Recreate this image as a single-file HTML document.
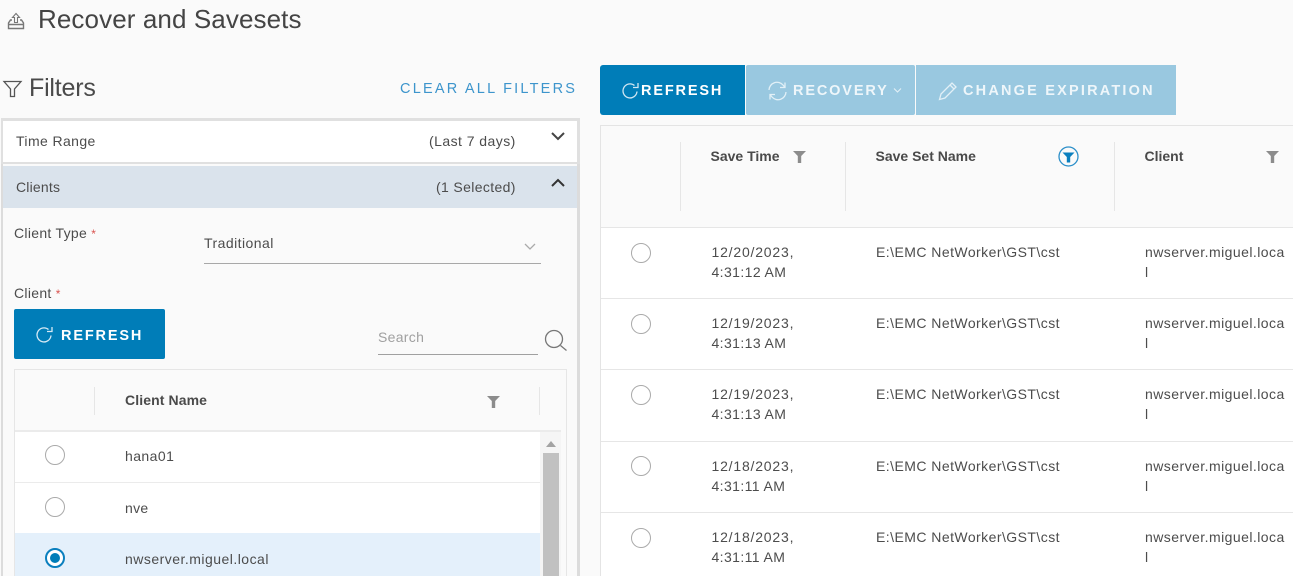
<!DOCTYPE html>
<html><head><meta charset="utf-8">
<style>
html,body{margin:0;padding:0;background:#fafafa;width:1293px;height:576px;overflow:hidden}
#p{width:1293px;height:576px;position:relative;overflow:hidden;font-family:"Liberation Sans",sans-serif;color:#444}
.a{position:absolute}
.t{position:absolute;white-space:nowrap;font-size:14px;line-height:20px;color:#4c4c4c;letter-spacing:.4px}
.d{letter-spacing:.8px}
.c{letter-spacing:.4px}
.b{font-weight:700;font-size:14px;color:#4a4a4a;letter-spacing:0}
.btn{position:absolute;color:#fff;font-weight:700;font-size:14.5px;letter-spacing:1.85px;white-space:nowrap;line-height:20px}
svg{position:absolute;overflow:visible}
.r{position:absolute;border:1.5px solid #aaa;border-radius:50%;box-sizing:border-box;width:20px;height:20px;background:#fff}
.ln{position:absolute;background:#e6e6e6}
</style></head><body><div id="p">

<svg style="left:7px;top:12px" width="18" height="18" viewBox="0 0 18 18" fill="none" stroke="#777" stroke-width="1.400"><path d="M5 8H3.500L1.500 11v5.500h15V11l-2-3H13M1.500 12.500h15"/><path d="M9 1.500L5.500 5.500h2v5h3v-5h2z" stroke-width="1.100"/></svg>
<div class="t" style="left:38px;top:3px;font-size:26px;line-height:32px;color:#444;letter-spacing:.1px">Recover and Savesets</div>

<svg style="left:3px;top:80px" width="20" height="18" viewBox="0 0 20 18" fill="none" stroke="#555" stroke-width="1.300"><path d="M1 1.500h17l-6.500 7.500v7.500h-4v-7.500z"/></svg>
<div class="t" style="left:29px;top:73px;font-size:25px;line-height:30px;color:#4a4a4a;letter-spacing:-.2px">Filters</div>
<div class="t" style="left:400px;top:79px;font-size:14.500px;color:#3d95cc;letter-spacing:2.220px">CLEAR ALL FILTERS</div>

<!-- left panel -->
<div class="a" style="left:1px;top:119px;width:579px;height:470px;box-sizing:border-box;border-left:2px solid #dcdcdc;border-right:3px solid #dcdcdc"></div>
<div class="a" style="left:1px;top:118px;width:579px;height:46px;box-sizing:border-box;border:2px solid #e0e0e0;border-top-width:3px;border-right-width:3px;background:#fff"></div>
<div class="a" style="left:3px;top:166px;width:574px;height:42px;background:#dae3ec"></div>
<div class="t" style="left:16px;top:131px">Time Range</div>
<div class="t" style="left:429px;top:131px;letter-spacing:.45px">(Last 7 days)</div>
<svg style="left:551px;top:132px" width="14" height="9" viewBox="0 0 14 9" fill="none" stroke="#444" stroke-width="2"><path d="M1 1l6 6 6-6"/></svg>
<div class="t" style="left:16px;top:177px;letter-spacing:.2px">Clients</div>
<div class="t" style="left:436px;top:177px;letter-spacing:.36px">(1 Selected)</div>
<svg style="left:551px;top:178px" width="14" height="9" viewBox="0 0 14 9" fill="none" stroke="#333" stroke-width="2"><path d="M1 8l6-6 6 6"/></svg>

<div class="t" style="left:14px;top:223px;letter-spacing:.3px">Client Type <span style="color:#d9534f;font-size:12px">*</span></div>
<div class="t" style="left:204px;top:233px;letter-spacing:.45px">Traditional</div>
<div class="ln" style="left:204px;top:263px;width:337px;height:1px;background:#a8a8a8"></div>
<svg style="left:524px;top:243px" width="12" height="7" viewBox="0 0 12 7" fill="none" stroke="#aaa" stroke-width="1.300"><path d="M1 1l5 5 5-5"/></svg>
<div class="t" style="left:14px;top:283px;letter-spacing:.3px">Client <span style="color:#d9534f;font-size:12px">*</span></div>

<div class="a" style="left:14px;top:309px;width:151px;height:50px;background:#007db8;border-radius:2px"></div>
<svg style="left:35px;top:326px" width="19" height="19" viewBox="0 0 19 19" fill="none" stroke="#d5e9f4" stroke-width="1.300"><path d="M16 9.500a7 7 0 1 1-2.500-6M17 1v4.500h-5"/></svg>
<div class="btn" style="left:61px;top:325.500px">REFRESH</div>

<div class="t" style="left:378px;top:327px;color:#a0a0a0;letter-spacing:.3px">Search</div>
<div class="ln" style="left:378px;top:354px;width:160px;height:1px;background:#a0a0a0"></div>
<svg style="left:544px;top:329px" width="24" height="24" viewBox="0 0 24 24" fill="none" stroke="#777" stroke-width="1.300"><circle cx="10" cy="10" r="8.500"/><path d="M16.500 16.500l6 5"/></svg>

<!-- client table -->
<div class="a" style="left:14px;top:369px;width:553px;height:220px;box-sizing:border-box;border:1px solid #e6e6e6"></div>
<div class="a" style="left:15px;top:430px;width:546px;height:2px;background:#ebebeb"></div>
<div class="ln" style="left:94px;top:387px;width:1px;height:28px"></div>
<div class="ln" style="left:539px;top:387px;width:1px;height:28px"></div>
<div class="t b" style="left:125px;top:390px;letter-spacing:.1px">Client Name</div>
<svg style="left:487px;top:396px" width="13" height="12" viewBox="0 0 13 12" fill="#8c8c8c"><path d="M0 0h13l-4.800 5v7h-3.400V5z"/></svg>
<div class="a" style="left:15px;top:432px;width:525px;height:50px;background:#fff"></div>
<div class="a" style="left:15px;top:482px;width:525px;height:1px;background:#ebebeb"></div>
<div class="a" style="left:15px;top:483px;width:525px;height:50px;background:#fff"></div>
<div class="a" style="left:15px;top:533px;width:525px;height:43px;background:#e4f0fb"></div>
<div class="r" style="left:45px;top:445px"></div>
<div class="r" style="left:45px;top:497px"></div>
<div class="a" style="left:45px;top:548px;width:20px;height:20px;box-sizing:border-box;border:2px solid #0a7fbe;border-radius:50%;background:#fff"></div>
<div class="a" style="left:50px;top:553px;width:10px;height:10px;border-radius:50%;background:#007db8"></div>
<div class="t" style="left:125px;top:446px;letter-spacing:.43px">hana01</div>
<div class="t" style="left:125px;top:498px;letter-spacing:.3px">nve</div>
<div class="t" style="left:125px;top:549px;letter-spacing:.48px">nwserver.miguel.local</div>
<div class="a" style="left:540px;top:432px;width:21px;height:144px;background:#f5f5f5"></div>
<div class="a" style="left:543px;top:453px;width:16px;height:123px;background:#c1c1c1"></div>
<svg style="left:546px;top:441px" width="10" height="6" viewBox="0 0 10 6" fill="#a3a3a3"><path d="M5 0l5 6H0z"/></svg>

<!-- action buttons -->
<div class="a" style="left:600px;top:65px;width:145px;height:50px;background:#007db8;border-radius:3px 0 0 3px"></div>
<div class="a" style="left:746px;top:65px;width:169px;height:50px;background:#99c8e0;border-radius:2px"></div>
<div class="a" style="left:916px;top:65px;width:260px;height:50px;background:#99c8e0"></div>
<svg style="left:621px;top:82px" width="19" height="19" viewBox="0 0 19 19" fill="none" stroke="#cfe6f2" stroke-width="1.300"><path d="M16 9.500a7 7 0 1 1-2.500-6M17 1v4.500h-5"/></svg>
<div class="btn" style="left:641px;top:81px">REFRESH</div>
<svg style="left:768px;top:81px" width="19" height="20" viewBox="0 0 19 20" fill="none" stroke="#e2f0f7" stroke-width="1.300"><path d="M1 9a8 8 0 0 1 14-5l2 2.500M17 1.500v5h-5M18 11a8 8 0 0 1-14 5l-2-2.500M2 18.500v-5h5"/></svg>
<div class="btn" style="left:793px;top:81px;color:#eef6fa">RECOVERY</div>
<svg style="left:893px;top:88px" width="9" height="5" viewBox="0 0 9 5" fill="none" stroke="#e2f0f7" stroke-width="1.100"><path d="M1 .5l3.500 3.500L8 .5"/></svg>
<svg style="left:938px;top:81px" width="20" height="20" viewBox="0 0 20 20" fill="none" stroke="#e2f0f7" stroke-width="1.300"><path d="M1.500 18.500l1.500-5.500L14 2l4 4L7 17zM12 4l4 4"/></svg>
<div class="btn" style="left:963px;top:81px;color:#eef6fa;letter-spacing:2.200px">CHANGE EXPIRATION</div>

<!-- main table -->
<div class="a" style="left:601px;top:125px;width:692px;height:1px;background:#e4e4e4"></div>
<div class="a" style="left:600px;top:125px;width:1px;height:451px;background:#e4e4e4"></div>
<div class="a" style="left:601px;top:228px;width:692px;height:348px;background:#fff"></div>
<div class="ln" style="left:680px;top:142px;width:1px;height:69px"></div>
<div class="ln" style="left:845px;top:142px;width:1px;height:69px"></div>
<div class="ln" style="left:1114px;top:142px;width:1px;height:69px"></div>
<div class="t b" style="left:710.500px;top:146px">Save Time</div>
<svg style="left:793px;top:151px" width="13" height="12" viewBox="0 0 13 12" fill="#8c8c8c"><path d="M0 0h13l-4.800 5v7h-3.400V5z"/></svg>
<div class="t b" style="left:875.500px;top:146px">Save Set Name</div>
<svg style="left:1058px;top:146px" width="21" height="21" viewBox="0 0 21 21"><circle cx="10.500" cy="10.500" r="9.500" fill="none" stroke="#2c8fc9" stroke-width="1.300"/><path d="M4.500 6.500h12l-4.300 4.500v5.500h-3.400V11z" fill="#0a7fbe"/></svg>
<div class="t b" style="left:1144.500px;top:146px">Client</div>
<svg style="left:1266px;top:151px" width="13" height="12" viewBox="0 0 13 12" fill="#8c8c8c"><path d="M0 0h13l-4.800 5v7h-3.400V5z"/></svg>

<div class="ln" style="left:601px;top:227px;width:692px;height:1px"></div>
<div class="ln" style="left:601px;top:298px;width:692px;height:1px"></div>
<div class="ln" style="left:601px;top:369px;width:692px;height:1px"></div>
<div class="ln" style="left:601px;top:441px;width:692px;height:1px"></div>
<div class="ln" style="left:601px;top:512px;width:692px;height:1px"></div>

<div class="r" style="left:631px;top:243px"></div>
<div class="t d" style="left:711.500px;top:242px">12/20/2023,<br><span class="c">4:31:12 AM</span></div>
<div class="t" style="left:876px;top:242px;letter-spacing:.45px">E:\EMC NetWorker\GST\cst</div>
<div class="t" style="left:1145px;top:242px;letter-spacing:.45px">nwserver.miguel.loca<br>l</div>

<div class="r" style="left:631px;top:314px"></div>
<div class="t d" style="left:711.500px;top:313px">12/19/2023,<br><span class="c">4:31:13 AM</span></div>
<div class="t" style="left:876px;top:313px;letter-spacing:.45px">E:\EMC NetWorker\GST\cst</div>
<div class="t" style="left:1145px;top:313px;letter-spacing:.45px">nwserver.miguel.loca<br>l</div>

<div class="r" style="left:631px;top:385px"></div>
<div class="t d" style="left:711.500px;top:384px">12/19/2023,<br><span class="c">4:31:13 AM</span></div>
<div class="t" style="left:876px;top:384px;letter-spacing:.45px">E:\EMC NetWorker\GST\cst</div>
<div class="t" style="left:1145px;top:384px;letter-spacing:.45px">nwserver.miguel.loca<br>l</div>

<div class="r" style="left:631px;top:456px"></div>
<div class="t d" style="left:711.500px;top:456px">12/18/2023,<br><span class="c">4:31:11 AM</span></div>
<div class="t" style="left:876px;top:456px;letter-spacing:.45px">E:\EMC NetWorker\GST\cst</div>
<div class="t" style="left:1145px;top:456px;letter-spacing:.45px">nwserver.miguel.loca<br>l</div>

<div class="r" style="left:631px;top:528px"></div>
<div class="t d" style="left:711.500px;top:527px">12/18/2023,<br><span class="c">4:31:11 AM</span></div>
<div class="t" style="left:876px;top:527px;letter-spacing:.45px">E:\EMC NetWorker\GST\cst</div>
<div class="t" style="left:1145px;top:527px;letter-spacing:.45px">nwserver.miguel.loca<br>l</div>

</div></body></html>
